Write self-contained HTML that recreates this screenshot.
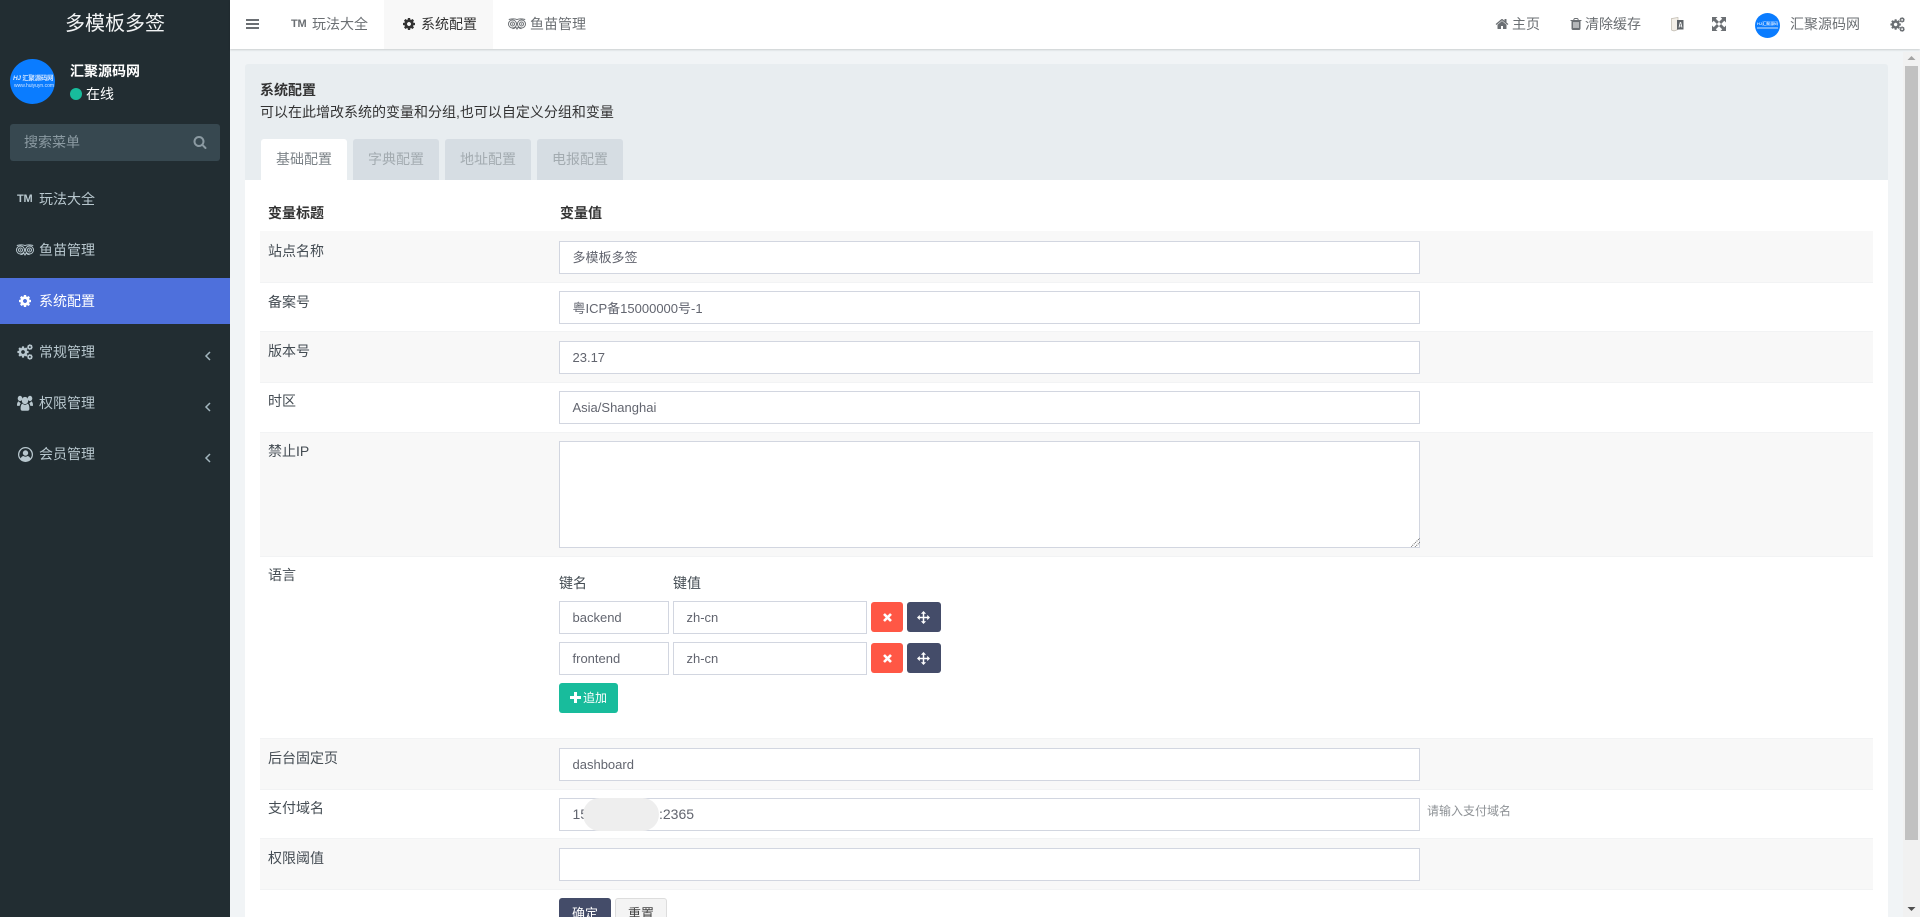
<!DOCTYPE html>
<html lang="zh-CN">
<head>
<meta charset="utf-8">
<title>系统配置</title>
<style>
*{box-sizing:border-box}
html,body{margin:0;padding:0;width:1920px;height:917px;overflow:hidden;background:#f1f4f6}
body{position:relative;font-family:"Liberation Sans","Noto Sans CJK SC",sans-serif;font-size:14px;color:#444c53}
.a{position:absolute;white-space:nowrap}
.t{line-height:20px;height:20px}
svg{position:absolute;display:block;fill:currentColor}
#side{left:0;top:0;width:230px;height:917px;background:#222d32}
#nav{left:230px;top:0;width:1690px;height:49px;background:#fff;box-shadow:0 1px 2px rgba(0,0,0,.16)}
.s{color:#b8c7ce}
.row{position:absolute;left:260px;width:1613px;border-bottom:1px solid #f2f3f4}
.g{background:#f8f8f8}
.inp{position:absolute;left:559px;width:861px;height:33px;background:#fff;border:1px solid #d2d6e0;color:#62656f;font-size:13px;line-height:31px;padding-left:12.500px;white-space:nowrap}
.lab{position:absolute;left:268px;line-height:20px;font-size:14px;color:#444c53}
.tab{position:absolute;top:139px;width:86px;height:41px;background:#d6dde3;border-radius:3px 3px 0 0;text-align:center;line-height:41px;font-size:14px;color:#a3abb0}
.nt{color:#6b6f73}
.btn{position:absolute;border-radius:3px;color:#fff}
</style>
</head>
<body>
<svg width="0" height="0" style="position:absolute"><defs>
<symbol id="gear" viewBox="0 0 1792 1792"><path d="M1152 896q0-106-75-181t-181-75-181 75-75 181 75 181 181 75 181-75 75-181zm512-109v222q0 12-8 23t-20 13l-185 28q-19 54-39 91 35 50 107 138 10 12 10 25t-9 23q-27 37-99 108t-94 71q-12 0-26-9l-138-108q-44 23-91 38-16 136-29 186-7 28-36 28h-222q-14 0-24.500-8.500t-11.500-21.500l-28-184q-49-16-90-37l-141 107q-10 9-25 9-14 0-25-11-126-114-165-168-7-10-7-23 0-12 8-23 15-21 51-66.500t54-70.500q-27-50-41-99l-183-27q-13-2-21-12.500t-8-23.500v-222q0-12 8-23t19-13l186-28q14-46 39-92-40-57-107-138-10-12-10-24 0-10 9-23 26-36 98.500-107.500t94.500-71.500q13 0 26 10l138 107q44-23 91-38 16-136 29-186 7-28 36-28h222q14 0 24.500 8.500t11.500 21.500l28 184q49 16 90 37l142-107q9-9 24-9 13 0 25 10 129 119 165 170 7 8 7 22 0 12-8 23-15 21-51 66.500t-54 70.500q26 50 41 98l183 28q13 2 21 12.500t8 23.500z"/></symbol>
<symbol id="gears" viewBox="0 0 16 16"><use href="#gear" x="-.5" y="1.500" width="13" height="13"/><use href="#gear" x="9.500" y="-.3" width="6.800" height="6.800"/><use href="#gear" x="9.500" y="9.500" width="6.800" height="6.800"/></symbol>
<symbol id="trip" viewBox="0 0 18 12"><g fill="none" stroke="currentColor"><path stroke-width="1" d="M.8 1.500C3 1 6.500.2 9 1.600 11.500.2 15 1 17.200 1.500M4.500 10.600c1.400 0 2.600-.6 3.300-1.600L9 11l1.200-2c.7 1 1.900 1.600 3.300 1.600"/><circle cx="4.500" cy="6" r="4" stroke-width="1"/><circle cx="13.500" cy="6" r="4" stroke-width="1"/><circle cx="4.500" cy="6" r="2" stroke-width="1"/><circle cx="13.500" cy="6" r="2" stroke-width="1"/></g><circle cx="4.500" cy="6" r=".8"/><circle cx="13.500" cy="6" r=".8"/></symbol>
</defs></svg>

<div id="side" class="a">
  <div class="a t" style="left:65px;top:14px;font-size:20px;color:#f2f4f5;line-height:20px">多模板多签</div>

  <div class="a" style="left:10px;top:59px;width:45px;height:45px;border-radius:50%;background:#0a7cff;overflow:hidden">
    <div class="a" style="left:3px;top:15px;font-size:6.500px;line-height:9px;color:#cfe4ff;font-weight:bold;letter-spacing:-.3px;width:40px;text-align:center"><i>HJ</i> 汇聚源码网</div>
    <div class="a" style="left:4px;top:24px;font-size:5px;line-height:6px;color:#cfe4ff">www.huiyuyn.com</div>
  </div>
  <div class="a t" style="left:70px;top:61px;color:#fff;font-weight:bold">汇聚源码网</div>
  <div class="a" style="left:70px;top:88px;width:12px;height:12px;border-radius:50%;background:#18bc9c"></div>
  <div class="a t" style="left:86px;top:84px;color:#fff">在线</div>

  <div class="a" style="left:10px;top:124px;width:210px;height:37px;border-radius:3px;background:#374850"></div>
  <div class="a t" style="left:24px;top:132px;color:#8b9aa2">搜索菜单</div>
  <svg style="left:193px;top:135px;color:#8b9aa2" width="14" height="14" viewBox="0 0 1792 1792"><path d="M1216 832q0-185-131.500-316.500t-316.500-131.500-316.500 131.500-131.500 316.500 131.500 316.500 316.500 131.500 316.500-131.500 131.500-316.500zm512 832q0 52-38 90t-90 38q-54 0-90-38l-343-342q-179 124-399 124-143 0-273.500-55.500t-225-150-150-225-55.500-273.500 55.500-273.500 150-225 225-150 273.500-55.500 273.500 55.500 225 150 150 225 55.500 273.500q0 220-124 399l343 343q37 37 37 90z"/></svg>

  <div class="a s" style="left:17px;top:193px;font-size:11px;font-weight:bold;line-height:13px;letter-spacing:-.2px">TM</div>
  <div class="a t s" style="left:39px;top:189px">玩法大全</div>

  <svg class="s" style="left:16px;top:244px" width="18" height="12"><use href="#trip"/></svg>
  <div class="a t s" style="left:39px;top:240px">鱼苗管理</div>

  <div class="a" style="left:0;top:278px;width:230px;height:46px;background:#4e70dc"></div>
  <svg style="left:18px;top:294px;color:#fff" width="14" height="14"><use href="#gear"/></svg>
  <div class="a t" style="left:39px;top:291px;color:#fff">系统配置</div>

  <svg class="s" style="left:17px;top:344px" width="16" height="16"><use href="#gears"/></svg>
  <div class="a t s" style="left:39px;top:342px">常规管理</div>
  <svg style="left:204px;top:350px;fill:none;stroke:#a3b6be;stroke-width:1.500" width="8" height="12"><path d="M6 2L2 6l4 4"/></svg>

  <svg class="s" style="left:17px;top:395px" width="16" height="16" viewBox="0 0 16 14" preserveAspectRatio="none"><circle cx="3" cy="3" r="2.300"/><circle cx="13" cy="3" r="2.300"/><circle cx="8" cy="4.800" r="3.200"/><path d="M0 9c0-2 .8-3.400 2-3.400.5 1 1 1.200 1.800 1.600C3 8 2.800 8.700 2.700 9.500H.6C.2 9.500 0 9.300 0 9zm16 0c0-2-.8-3.400-2-3.400-.5 1-1 1.200-1.800 1.600.8.800 1 1.500 1.100 2.300h2.100c.4 0 .7-.2.700-.5zM3.600 12c0-3 1-4.300 2.100-4.300.7.600 1.400.9 2.300.9s1.600-.3 2.300-.9c1.100 0 2.100 1.300 2.100 4.300 0 1.200-.7 1.800-1.800 1.800H5.400c-1.100 0-1.800-.6-1.800-1.800z"/></svg>
  <div class="a t s" style="left:39px;top:393px">权限管理</div>
  <svg style="left:204px;top:401px;fill:none;stroke:#a3b6be;stroke-width:1.500" width="8" height="12"><path d="M6 2L2 6l4 4"/></svg>

  <svg class="s" style="left:18px;top:447px" width="15" height="15" viewBox="0 0 15 15"><path fill-rule="evenodd" d="M7.500 0a7.500 7.500 0 1 1 0 15 7.500 7.500 0 0 1 0-15zm0 1.300a6.200 6.200 0 0 0-4.800 10.100c.5-1.400 1.500-2.300 2.700-2.400.6.400 1.300.7 2.100.7s1.500-.3 2.100-.7c1.200.1 2.200 1 2.700 2.400A6.200 6.200 0 0 0 7.500 1.300zm0 2a2.700 2.700 0 1 1 0 5.400 2.700 2.700 0 0 1 0-5.400z"/></svg>
  <div class="a t s" style="left:39px;top:444px">会员管理</div>
  <svg style="left:204px;top:452px;fill:none;stroke:#a3b6be;stroke-width:1.500" width="8" height="12"><path d="M6 2L2 6l4 4"/></svg>
</div>

<div id="nav" class="a"></div>
<div class="a" style="left:384px;top:0;width:109px;height:49px;background:#f8f8f8"></div>
<svg class="nt" style="left:246px;top:19px" width="13" height="10" viewBox="0 0 13 10"><rect y="0" width="13" height="2"/><rect y="4" width="13" height="2"/><rect y="8" width="13" height="2"/></svg>
<div class="a nt" style="left:291px;top:18px;font-size:11px;font-weight:bold;line-height:13px;letter-spacing:-.2px">TM</div>
<div class="a t nt" style="left:312px;top:14px">玩法大全</div>
<svg style="left:402px;top:17px;color:#333" width="14" height="14"><use href="#gear"/></svg>
<div class="a t" style="left:421px;top:14px;color:#333">系统配置</div>
<svg class="nt" style="left:508px;top:18px" width="18" height="12"><use href="#trip"/></svg>
<div class="a t nt" style="left:530px;top:14px">鱼苗管理</div>

<svg class="nt" style="left:1495px;top:17px" width="14" height="14" viewBox="0 0 1792 1792"><path d="M1472 992v480q0 26-19 45t-45 19h-384v-384h-256v384h-384q-26 0-45-19t-19-45v-480q0-1 .5-3t.5-3l575-474 575 474q1 2 1 6zm223-69l-62 74q-8 9-21 11h-3q-13 0-21-7l-692-577-692 577q-12 8-24 7-13-2-21-11l-62-74q-8-10-7-23.500t11-21.500l719-599q32-26 76-26t76 26l244 204v-195q0-14 9-23t23-9h192q14 0 23 9t9 23v408l219 182q10 8 11 21.500t-7 23.500z"/></svg>
<div class="a t nt" style="left:1512px;top:14px">主页</div>
<svg class="nt" style="left:1569px;top:17px" width="14" height="14" viewBox="0 0 1792 1792"><path d="M704 1376v-704q0-14-9-23t-23-9h-64q-14 0-23 9t-9 23v704q0 14 9 23t23 9h64q14 0 23-9t9-23zm256 0v-704q0-14-9-23t-23-9h-64q-14 0-23 9t-9 23v704q0 14 9 23t23 9h64q14 0 23-9t9-23zm256 0v-704q0-14-9-23t-23-9h-64q-14 0-23 9t-9 23v704q0 14 9 23t23 9h64q14 0 23-9t9-23zm-544-992h448l-48-117q-7-9-17-11h-317q-10 2-17 11zm928 32v64q0 14-9 23t-23 9h-96v948q0 83-47 143.500t-113 60.500h-832q-66 0-113-58.500t-47-141.500v-952h-96q-14 0-23-9t-9-23v-64q0-14 9-23t23-9h309l70-167q15-37 54-63t79-26h320q40 0 79 26t54 63l70 167h309q14 0 23 9t9 23z"/></svg>
<div class="a t nt" style="left:1585px;top:14px">清除缓存</div>
<svg style="left:1671px;top:17px" width="13" height="15" viewBox="0 0 13 15"><path d="M.5 1.500L7 .5v12L3 14 .5 13z" fill="#f3efe8" stroke="#bdb7ac" stroke-width=".7"/><path d="M6 3h6.500v9.500H6z" fill="#5f6468"/><path d="M8 10.500l1.200-5h.6l1.200 5M8.500 9h2" fill="none" stroke="#fff" stroke-width=".8"/></svg>
<svg class="nt" style="left:1712px;top:17px" width="14" height="14" viewBox="0 0 14 14"><path d="M0 0h5.500L3.800 1.700 7 4.900 4.900 7 1.700 3.800 0 5.500zM14 0v5.500l-1.700-1.700L9.100 7 7 4.900l3.200-3.200L8.500 0zM0 14V8.500l1.700 1.700L4.900 7 7 9.100l-3.200 3.200L5.500 14zM14 14H8.500l1.700-1.700L7 9.100 9.100 7l3.200 3.200L14 8.500z"/></svg>
<div class="a" style="left:1755px;top:13px;width:25px;height:25px;border-radius:50%;background:#0a7cff;overflow:hidden">
  <div class="a" style="left:2px;top:8px;width:21px;text-align:center;font-size:4px;line-height:5px;color:#cfe4ff;font-weight:bold">HJ汇聚源码</div>
  <div class="a" style="left:2px;top:14px;width:21px;height:2px;background:#6fb0fb"></div>
</div>
<div class="a t nt" style="left:1790px;top:14px">汇聚源码网</div>
<svg class="nt" style="left:1890px;top:17px" width="15" height="15"><use href="#gears"/></svg>

<!-- panel -->
<div class="a" style="left:245px;top:64px;width:1643px;height:116px;background:#e8edf0;border-radius:3px 3px 0 0"></div>
<div class="a" style="left:245px;top:180px;width:1643px;height:737px;background:#fff"></div>
<div class="a t" style="left:260px;top:80px;color:#333;font-weight:bold">系统配置</div>
<div class="a t" style="left:260px;top:102px;color:#333">可以在此增改系统的变量和分组,也可以自定义分组和变量</div>
<div class="tab" style="left:261px;background:#fff;color:#7b8287">基础配置</div>
<div class="tab" style="left:353px">字典配置</div>
<div class="tab" style="left:445px">地址配置</div>
<div class="tab" style="left:537px">电报配置</div>

<div class="a t" style="left:268px;top:203px;color:#333;font-weight:bold">变量标题</div>
<div class="a t" style="left:560px;top:203px;color:#333;font-weight:bold">变量值</div>

<div class="row g" style="top:231px;height:52px"></div>
<div class="row" style="top:283px;height:49px"></div>
<div class="row g" style="top:332px;height:51px"></div>
<div class="row" style="top:383px;height:50px"></div>
<div class="row g" style="top:433px;height:124px"></div>
<div class="row" style="top:557px;height:182px"></div>
<div class="row g" style="top:739px;height:51px"></div>
<div class="row" style="top:790px;height:49px"></div>
<div class="row g" style="top:839px;height:51px"></div>

<div class="lab" style="top:241px">站点名称</div>
<div class="inp" style="top:241px">多模板多签</div>
<div class="lab" style="top:292px">备案号</div>
<div class="inp" style="top:291px;line-height:33px">粤ICP备15000000号-1</div>
<div class="lab" style="top:341px">版本号</div>
<div class="inp" style="top:341px">23.17</div>
<div class="lab" style="top:391px">时区</div>
<div class="inp" style="top:391px">Asia/Shanghai</div>
<div class="lab" style="top:441px">禁止IP</div>
<div class="inp" style="top:441px;height:107px"></div>
<svg style="left:1411px;top:538px;fill:none;stroke:#666;stroke-width:1;stroke-dasharray:1 1" width="9" height="9"><path d="M0 9L9 0M4 9l5-5"/></svg>

<div class="lab" style="top:565px">语言</div>
<div class="a t" style="left:559px;top:573px;color:#444c53">键名</div>
<div class="a t" style="left:673px;top:573px;color:#444c53">键值</div>
<div class="inp" style="top:601px;width:110px">backend</div>
<div class="inp" style="top:601px;left:673px;width:194px">zh-cn</div>
<div class="btn" style="left:871px;top:602px;width:32px;height:30px;background:#ff5745"></div>
<svg style="left:883px;top:613px;fill:none;stroke:#fff;stroke-width:2.600" width="9" height="9"><path d="M1 1l7 7M8 1l-7 7"/></svg>
<div class="btn" style="left:907px;top:602px;width:34px;height:30px;background:#444c69"></div>
<svg style="left:917px;top:611px;color:#fff" width="13" height="13" viewBox="0 0 14 14"><path d="M7 0l2.800 3H7.800v3.200H11V4.200L14 7l-3 2.800V7.800H7.800V11h2L7 14l-2.800-3h2V7.800H3v2L0 7l3-2.800v2h3.200V3h-2z"/></svg>

<div class="inp" style="top:642px;width:110px">frontend</div>
<div class="inp" style="top:642px;left:673px;width:194px">zh-cn</div>
<div class="btn" style="left:871px;top:643px;width:32px;height:30px;background:#ff5745"></div>
<svg style="left:883px;top:654px;fill:none;stroke:#fff;stroke-width:2.600" width="9" height="9"><path d="M1 1l7 7M8 1l-7 7"/></svg>
<div class="btn" style="left:907px;top:643px;width:34px;height:30px;background:#444c69"></div>
<svg style="left:917px;top:652px;color:#fff" width="13" height="13" viewBox="0 0 14 14"><path d="M7 0l2.800 3H7.800v3.200H11V4.200L14 7l-3 2.800V7.800H7.800V11h2L7 14l-2.800-3h2V7.800H3v2L0 7l3-2.800v2h3.200V3h-2z"/></svg>

<div class="btn" style="left:559px;top:683px;width:59px;height:30px;background:#18bc9c"></div>
<svg style="left:570px;top:692px;color:#fff" width="11" height="11" viewBox="0 0 11 11"><path d="M4 0h3v4h4v3H7v4H4V7H0V4h4z"/></svg>
<div class="a" style="left:583px;top:688px;line-height:20px;font-size:12px;color:#fff">追加</div>

<div class="lab" style="top:748px">后台固定页</div>
<div class="inp" style="top:748px">dashboard</div>
<div class="lab" style="top:798px">支付域名</div>
<div class="inp" style="top:798px;font-size:14px">15</div>
<div class="a" style="left:659px;top:799px;line-height:31px;font-size:14px;color:#62656f">:2365</div>
<div class="a" style="left:583px;top:798px;width:76px;height:33px;border-radius:17px;background:#eeeeee"></div>
<div class="a" style="left:1427px;top:801px;line-height:20px;font-size:12px;color:#8e9296">请输入支付域名</div>
<div class="lab" style="top:848px">权限阈值</div>
<div class="inp" style="top:848px"></div>

<div class="btn" style="left:559px;top:898px;width:52px;height:32px;background:#444c69;text-align:center;line-height:32px;font-size:13px">确定</div>
<div class="btn" style="left:615px;top:898px;width:52px;height:32px;background:#f4f4f4;border:1px solid #ddd;color:#444;text-align:center;line-height:30px;font-size:13px">重置</div>

<!-- scrollbar -->
<div class="a" style="left:1903px;top:52px;width:17px;height:865px;background:#f1f1f1"></div>
<div class="a" style="left:1905px;top:66px;width:13px;height:774px;background:#c1c1c1"></div>
<svg style="left:1907px;top:55px;color:#a3a3a3" width="9" height="6"><path d="M4.500 1L8.500 5H.5z"/></svg>
<svg style="left:1907px;top:906px;color:#505050" width="9" height="6"><path d="M.5 1h8L4.500 5z"/></svg>
</body>
</html>
